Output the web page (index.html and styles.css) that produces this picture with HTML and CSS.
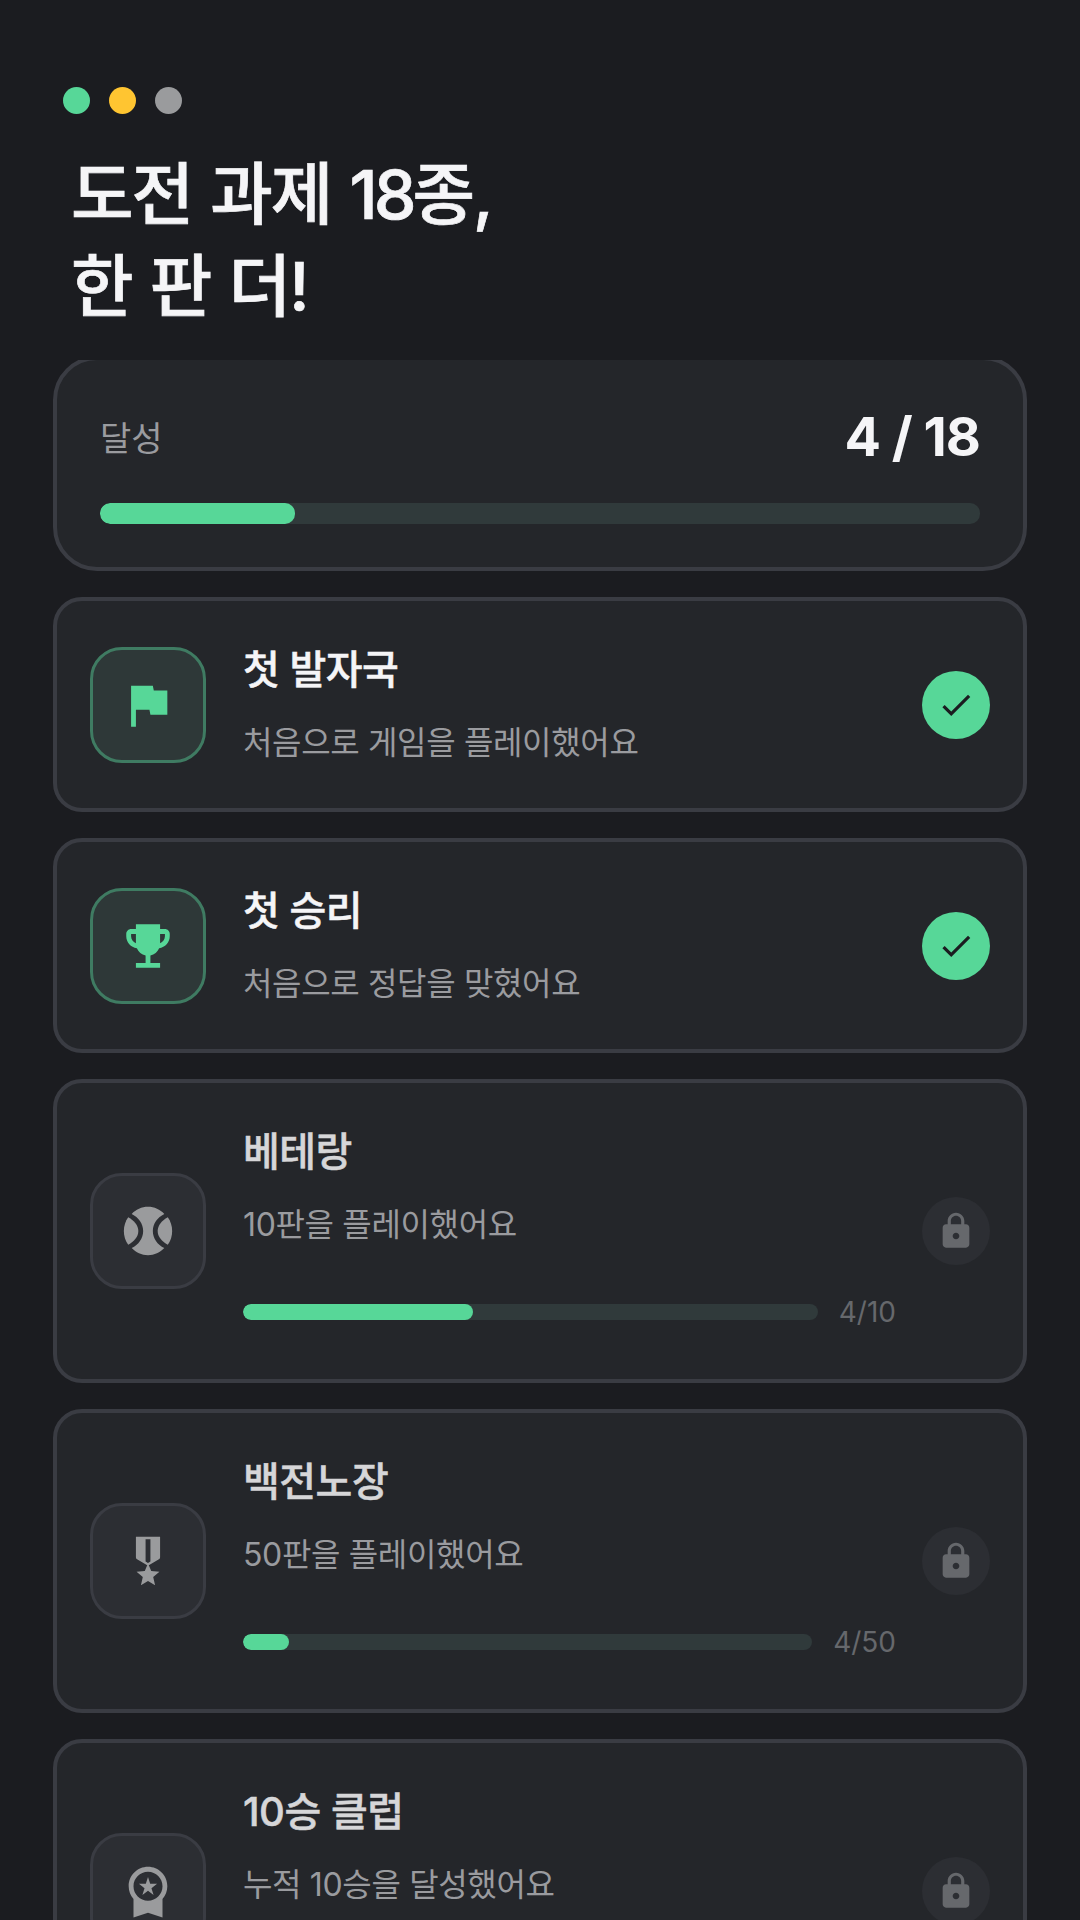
FILE: index.html
```html
<!DOCTYPE html>
<html lang="ko">
<head>
<meta charset="utf-8">
<title>도전 과제</title>
<link rel="stylesheet" href="styles.css">
</head>
<body>
<div class="screen">
  <header class="header">
    <div class="dots"><span class="dot dot-green"></span><span class="dot dot-yellow"></span><span class="dot dot-gray"></span></div>
    <h1 class="title">도전 과제 <span class="title-num">18</span>종,<br>한 판 더!</h1>
  </header>
  <main class="list">
    <section class="card summary">
      <div class="summary-top"><span class="summary-label">달성</span><span class="summary-count">4 / 18</span></div>
      <div class="track track-big"><div class="fill" style="width:22.2%"></div></div>
    </section>

    <article class="card item">
      <div class="tile tile-done">
        <svg class="icon" viewBox="0 0 24 24"><path d="M14.4 6L14 4H5v17h2v-7h5.6l.4 2h7V6z"/></svg>
      </div>
      <div class="body"><div class="name name-done">첫 발자국</div><div class="desc">처음으로 게임을 플레이했어요</div></div>
      <div class="badge badge-done"><svg class="check" viewBox="0 0 24 24"><path d="M9 16.17L4.83 12l-1.42 1.41L9 19 21 7l-1.41-1.41z"/></svg></div>
    </article>

    <article class="card item">
      <div class="tile tile-done">
        <svg class="icon" viewBox="0 0 24 24"><path d="M19 5h-2V3H7v2H5c-1.1 0-2 .9-2 2v1c0 2.55 1.92 4.63 4.39 4.94.63 1.5 1.98 2.63 3.61 2.96V19H7v2h10v-2h-4v-3.1c1.63-.33 2.98-1.46 3.61-2.96C19.08 12.63 21 10.55 21 8V7c0-1.1-.9-2-2-2zM5 8V7h2v3.82C5.84 10.4 5 9.3 5 8zm14 0c0 1.3-.84 2.4-2 2.82V7h2v1z"/></svg>
      </div>
      <div class="body"><div class="name name-done">첫 승리</div><div class="desc">처음으로 정답을 맞혔어요</div></div>
      <div class="badge badge-done"><svg class="check" viewBox="0 0 24 24"><path d="M9 16.17L4.83 12l-1.42 1.41L9 19 21 7l-1.41-1.41z"/></svg></div>
    </article>

    <article class="card item">
      <div class="tile">
        <svg class="icon icon-gray" viewBox="0 0 24 24"><path d="M3.81 6.28C2.67 7.89 2 9.86 2 12s.67 4.11 1.81 5.72C6.23 16.36 8 14.41 8 12S6.23 7.64 3.81 6.28z"/><path d="M20.19 6.28C17.77 7.64 16 9.59 16 12s1.77 4.36 4.19 5.72C21.33 16.11 22 14.14 22 12s-.67-4.11-1.81-5.72z"/><path d="M14 12c0-3.09 1.91-5.65 4.75-7.05C17.01 3.12 14.63 2 12 2S6.99 3.12 5.25 4.95C8.09 6.35 10 8.91 10 12s-1.91 5.65-4.75 7.05C6.99 20.88 9.37 22 12 22s5.01-1.12 6.75-2.95C15.91 17.65 14 15.09 14 12z"/></svg>
      </div>
      <div class="body">
        <div class="name">베테랑</div><div class="desc">10판을 플레이했어요</div>
        <div class="progress"><div class="track"><div class="fill" style="width:40%"></div></div><span class="count">4/10</span></div>
      </div>
      <div class="badge badge-lock"><svg class="lock" viewBox="0 0 24 24"><path d="M18 8h-1V6c0-2.76-2.24-5-5-5S7 3.24 7 6v2H6c-1.1 0-2 .9-2 2v10c0 1.1.9 2 2 2h12c1.1 0 2-.9 2-2V10c0-1.1-.9-2-2-2zm-6 9c-1.1 0-2-.9-2-2s.9-2 2-2 2 .9 2 2-.9 2-2 2zm3.100-9H8.900V6c0-1.71 1.39-3.1 3.1-3.1 1.71 0 3.1 1.39 3.1 3.1v2z"/></svg></div>
    </article>

    <article class="card item">
      <div class="tile">
        <svg class="icon icon-gray" viewBox="0 0 24 24"><path d="M17 10.43V2H7v8.43c0 .35.18.68.48.86l4.18 2.51-.99 2.34-3.41.29 2.59 2.24L9.07 22 12 20.23 14.93 22l-.78-3.33 2.59-2.24-3.41-.29-.99-2.34 4.18-2.51c.3-.18.48-.51.48-.86zm-4 1.8l-1 .6-1-.6V3h2v9.23z"/></svg>
      </div>
      <div class="body">
        <div class="name">백전노장</div><div class="desc">50판을 플레이했어요</div>
        <div class="progress"><div class="track"><div class="fill" style="width:8%"></div></div><span class="count">4/50</span></div>
      </div>
      <div class="badge badge-lock"><svg class="lock" viewBox="0 0 24 24"><path d="M18 8h-1V6c0-2.76-2.24-5-5-5S7 3.24 7 6v2H6c-1.1 0-2 .9-2 2v10c0 1.1.9 2 2 2h12c1.1 0 2-.9 2-2V10c0-1.1-.9-2-2-2zm-6 9c-1.1 0-2-.9-2-2s.9-2 2-2 2 .9 2 2-.9 2-2 2zm3.100-9H8.900V6c0-1.71 1.39-3.1 3.1-3.1 1.71 0 3.1 1.39 3.1 3.1v2z"/></svg></div>
    </article>

    <article class="card item">
      <div class="tile">
        <svg class="icon icon-gray" viewBox="0 0 24 24"><path d="M9.68 13.69L12 11.93l2.31 1.76-.88-2.85L15.75 9h-2.84L12 6.19 11.09 9H8.25l2.31 1.84-.88 2.85zM20 10c0-4.42-3.58-8-8-8s-8 3.58-8 8c0 2.03.76 3.87 2 5.28V23l6-2 6 2v-7.72c1.24-1.41 2-3.25 2-5.28zm-8-6c3.31 0 6 2.69 6 6s-2.69 6-6 6-6-2.69-6-6 2.69-6 6-6z"/></svg>
      </div>
      <div class="body">
        <div class="name">10승 클럽</div><div class="desc">누적 10승을 달성했어요</div>
        <div class="progress"><div class="track"><div class="fill" style="width:40%"></div></div><span class="count">4/10</span></div>
      </div>
      <div class="badge badge-lock"><svg class="lock" viewBox="0 0 24 24"><path d="M18 8h-1V6c0-2.76-2.24-5-5-5S7 3.24 7 6v2H6c-1.1 0-2 .9-2 2v10c0 1.1.9 2 2 2h12c1.1 0 2-.9 2-2V10c0-1.1-.9-2-2-2zm-6 9c-1.1 0-2-.9-2-2s.9-2 2-2 2 .9 2 2-.9 2-2 2zm3.100-9H8.900V6c0-1.71 1.39-3.1 3.1-3.1 1.71 0 3.1 1.39 3.1 3.1v2z"/></svg></div>
    </article>
  </main>
</div>
</body>
</html>
```
FILE: styles.css
```css
* { box-sizing: border-box; }
html, body { margin: 0; padding: 0; background: #1b1c20; }
body { font-family: Inter, "Noto Sans CJK KR", sans-serif; }
.screen { width: 1080px; height: 1920px; overflow: hidden; display: flex; flex-direction: column; }
.header { height: 360px; padding: 87px 0 0 63px; flex: none; }
.dots { display: flex; gap: 19px; }
.dot { width: 27px; height: 27px; border-radius: 50%; }
.dot-green { background: #57d798; }
.dot-yellow { background: #ffc531; }
.dot-gray { background: #9a9b9d; }
.title { margin: 34px 0 0 8px; font-size: 68px; line-height: 92px; font-weight: 500; color: #f5f5f7; letter-spacing: -2px; word-spacing: 2px; -webkit-text-stroke: 0.7px #f5f5f7; }
.title-num { letter-spacing: -4px; }
.list { flex: 1; min-height: 0; overflow: hidden; padding: 0 53px; display: flex; flex-direction: column; gap: 26px; }
.card { flex: none; background: #24262a; border: 4px solid #3a3c43; border-radius: 29px; }
.summary { height: 215px; margin-top: -4px; padding: 45px 43px 0; border-radius: 44px; }
.summary-top { display: flex; justify-content: space-between; align-items: center; height: 62px; }
.summary-label { font-size: 34px; color: #9a9b9f; }
.summary-count { font-size: 54px; font-weight: 700; color: #f5f5f7; letter-spacing: -1px; }
.track { flex: 1; height: 16px; border-radius: 8px; background: #303a3b; overflow: hidden; }
.track-big { height: 21px; border-radius: 10px; margin-top: 36px; }
.fill { height: 100%; border-radius: inherit; background: #57d798; }
.item { display: flex; align-items: center; padding: 39px 33px; }
.tile { flex: none; width: 116px; height: 116px; border-radius: 32px; border: 3px solid #3a3c43; background: #2c2e33; display: flex; align-items: center; justify-content: center; }
.tile-done { border-color: #3f7b62; background: #2e3838; }
.icon { width: 58px; height: 58px; fill: #57d798; display: block; }
.icon-gray { fill: #9a9b9d; }
.body { flex: 1; min-width: 0; margin: 0 26px 0 37px; padding: 1px 0 3px; }
.name { font-size: 40px; line-height: 58px; font-weight: 500; color: #d6d6d8; letter-spacing: -0.5px; -webkit-text-stroke: 0.5px currentColor; }
.name-done { color: #f5f5f7; }
.desc { margin-top: 21px; font-size: 32px; line-height: 46px; color: #9a9b9f; letter-spacing: -0.35px; }
.progress { display: flex; align-items: center; gap: 21px; margin: 44px 0 5px; height: 40px; }
.count { flex: none; font-size: 28px; color: #66686c; }
.badge { flex: none; width: 68px; height: 68px; border-radius: 50%; display: flex; align-items: center; justify-content: center; }
.badge-done { background: #57d798; }
.badge-lock { background: #2c2e33; }
.check { width: 38px; height: 38px; fill: #1b1c20; }
.lock { width: 40px; height: 40px; fill: #66686c; }
```
